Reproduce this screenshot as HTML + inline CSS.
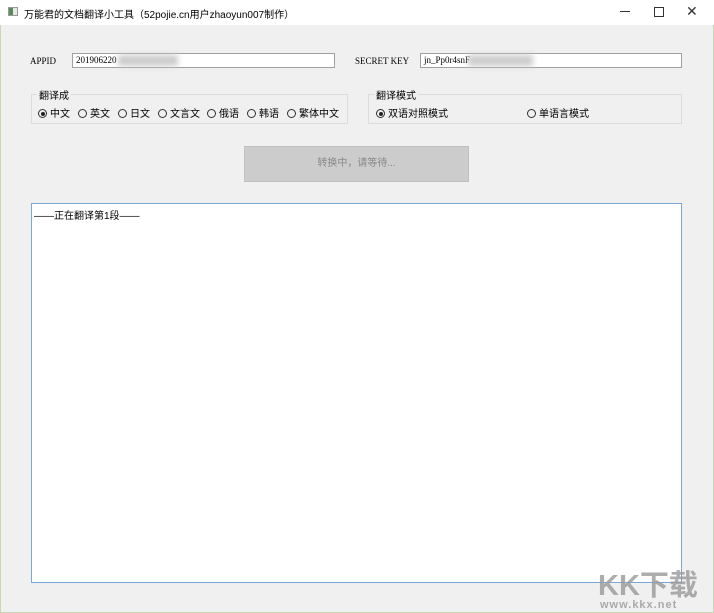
<!DOCTYPE html>
<html><head><meta charset="utf-8"><style>
*{margin:0;padding:0;box-sizing:border-box}
body{width:714px;height:613px;background:#f0f0f0;font-family:"Liberation Sans","Noto Sans CJK SC",sans-serif;font-size:10px;color:#000;position:relative;overflow:hidden}
.a{position:absolute}
.title{left:0;top:0;width:714px;height:25px;background:#fff}
.inp{background:#fff;border:1px solid #a0a0a0;height:15px;font-family:"Liberation Serif",serif;font-size:9px;padding-left:3px;line-height:13px}
.lbl{font-family:"Liberation Serif",serif;font-size:9px}
.grp{border:1px solid #dcdcdc}
.leg{background:#f0f0f0;padding:0 2px}
.r{display:inline-block;width:9px;height:9px;border:1px solid #333;border-radius:50%;vertical-align:-1px;margin-right:3px;position:relative}
.r.on::after{content:"";position:absolute;left:1.5px;top:1.5px;width:4px;height:4px;border-radius:50%;background:#222}
.blur{background:#ccc;filter:blur(3px)}
</style></head><body>
<div class="a" style="left:0;top:0;width:714px;height:613px;border:1px solid #c8d8b0"></div>
<div class="a title"></div>
<div class="a" style="left:8px;top:7px;width:10px;height:9px;border:1px solid #999;background:#e8e8e8"><div style="width:4px;height:7px;background:#5a8a5a"></div></div>
<div class="a" style="left:24px;top:6px;font-size:10px">万能君的文档翻译小工具（52pojie.cn用户zhaoyun007制作）</div>
<div class="a" style="left:620px;top:11px;width:10px;height:1px;background:#333"></div>
<div class="a" style="left:654px;top:7px;width:10px;height:10px;border:1px solid #333"></div>
<div class="a" style="left:686px;top:3px;font-size:14px;color:#333">✕</div>

<div class="a lbl" style="left:30px;top:56px">APPID</div>
<div class="a inp" style="left:72px;top:53px;width:263px">201906220</div>
<div class="a blur" style="left:118px;top:55px;width:60px;height:11px"></div>
<div class="a lbl" style="left:355px;top:56px">SECRET KEY</div>
<div class="a inp" style="left:420px;top:53px;width:262px">jn_Pp0r4snF</div>
<div class="a blur" style="left:468px;top:55px;width:65px;height:11px"></div>

<div class="a grp" style="left:31px;top:94px;width:317px;height:30px"></div>
<div class="a leg" style="left:37px;top:87px">翻译成</div>
<div class="a" style="left:38px;top:105px"><span class="r on"></span>中文</div>
<div class="a" style="left:78px;top:105px"><span class="r"></span>英文</div>
<div class="a" style="left:118px;top:105px"><span class="r"></span>日文</div>
<div class="a" style="left:158px;top:105px"><span class="r"></span>文言文</div>
<div class="a" style="left:207px;top:105px"><span class="r"></span>俄语</div>
<div class="a" style="left:247px;top:105px"><span class="r"></span>韩语</div>
<div class="a" style="left:287px;top:105px"><span class="r"></span>繁体中文</div>

<div class="a grp" style="left:368px;top:94px;width:314px;height:30px"></div>
<div class="a leg" style="left:374px;top:87px">翻译模式</div>
<div class="a" style="left:376px;top:105px"><span class="r on"></span>双语对照模式</div>
<div class="a" style="left:527px;top:105px"><span class="r"></span>单语言模式</div>

<div class="a" style="left:244px;top:146px;width:225px;height:36px;background:#cccccc;border:1px solid #c0c0c0;color:#888;text-align:center;line-height:34px">转换中，请等待...</div>

<div class="a" style="left:31px;top:203px;width:651px;height:380px;background:#fff;border:1px solid #7aa7d6;padding:3px 2px">——正在翻译第1段——</div>

<div class="a" style="left:598px;top:562px;font-size:29px;font-weight:bold;color:#999;opacity:.8">KK下载</div>
<div class="a" style="left:600px;top:599px;font-size:11px;font-weight:bold;color:#aaa;letter-spacing:1px">www.kkx.net</div>
</body></html>
